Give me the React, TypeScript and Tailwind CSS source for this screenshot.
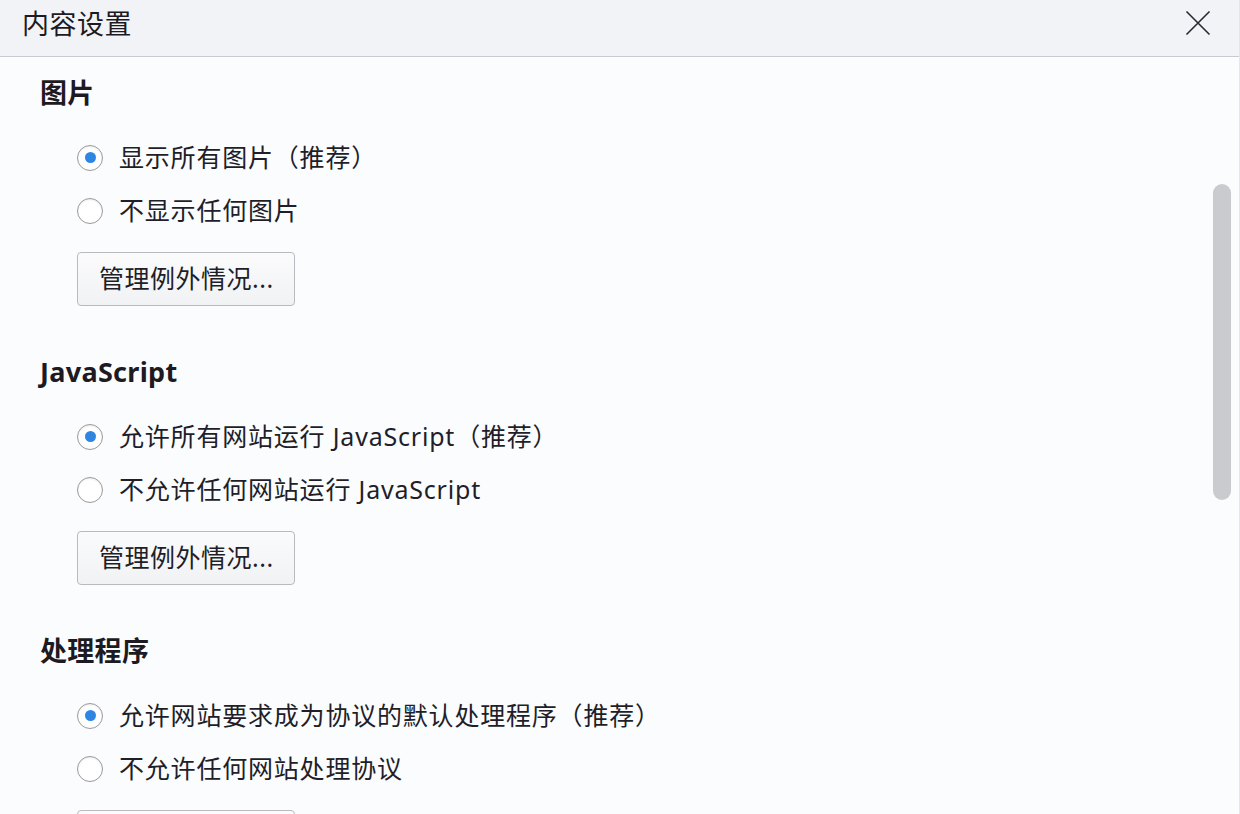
import React from "react";

type Option = { label: string; checked?: boolean };

interface SectionProps {
  title: string;
  options: Option[];
}

function Radio({ checked }: { checked?: boolean }) {
  return (
    <span className="flex h-[26px] w-[26px] shrink-0 items-center justify-center rounded-full border-[1.5px] border-[#9a9a9e] bg-white shadow-[inset_0_1px_2px_rgba(0,0,0,0.08)]">
      {checked && <span className="h-[11px] w-[11px] rounded-full bg-[#2f86e2]" />}
    </span>
  );
}

function Section({ title, options }: SectionProps) {
  return (
    <section className="flex flex-col">
      <h2 className="h-[36px] text-[27px] font-bold leading-[36px] tracking-[0.3px] text-[#1d1a22]">{title}</h2>
      <div className="mt-[20px] flex flex-col pl-[37px]">
        {options.map((opt) => (
          <label key={opt.label} className="flex h-[53px] items-center gap-[16px]">
            <Radio checked={opt.checked} />
            <span className="text-[25px] tracking-[0.8px] text-[#221e28]">{opt.label}</span>
          </label>
        ))}
        <button className="mt-[15px] flex h-[54px] w-[218px] items-center rounded-[4px] border border-[#b9babf] bg-gradient-to-b from-[#fbfbfc] to-[#f1f2f4] pl-[21px] text-[25px] tracking-[0.5px] text-[#221e28]">
          管理例外情况...
        </button>
      </div>
    </section>
  );
}

export default function App() {
  return (
    <div
      className="flex h-[814px] w-[1240px] flex-col overflow-hidden border-r border-[#e4e6ea] bg-[#fbfcfe]"
      style={{ fontFamily: '"Noto Sans", "Noto Sans CJK SC", sans-serif' }}
    >
      <header className="flex h-[57px] shrink-0 items-center justify-between border-b border-[#c6cad1] bg-[#f1f3f7] pl-[22px] pr-[28px]">
        <h1 className="pb-[8px] text-[27px] tracking-[0.5px] text-[#1d1a22]">内容设置</h1>
        <svg width="26" height="26" viewBox="0 0 26 26" className="mb-[10px]">
          <path d="M1.5 1.5 L24.5 24.5 M24.5 1.5 L1.5 24.5" stroke="#2a2730" strokeWidth="1.6" fill="none" />
        </svg>
      </header>
      <div className="flex flex-1">
        <main className="flex flex-1 flex-col gap-[48px] pl-[40px] pt-[18px]">
          <Section
            title="图片"
            options={[{ label: "显示所有图片（推荐）", checked: true }, { label: "不显示任何图片" }]}
          />
          <Section
            title="JavaScript"
            options={[
              { label: "允许所有网站运行 JavaScript（推荐）", checked: true },
              { label: "不允许任何网站运行 JavaScript" },
            ]}
          />
          <Section
            title="处理程序"
            options={[
              { label: "允许网站要求成为协议的默认处理程序（推荐）", checked: true },
              { label: "不允许任何网站处理协议" },
            ]}
          />
        </main>
        <div className="w-[26px] shrink-0 pr-[7px] pt-[127px]">
          <div className="h-[316px] w-[18px] rounded-full bg-[#c9cbcf]" />
        </div>
      </div>
    </div>
  );
}
